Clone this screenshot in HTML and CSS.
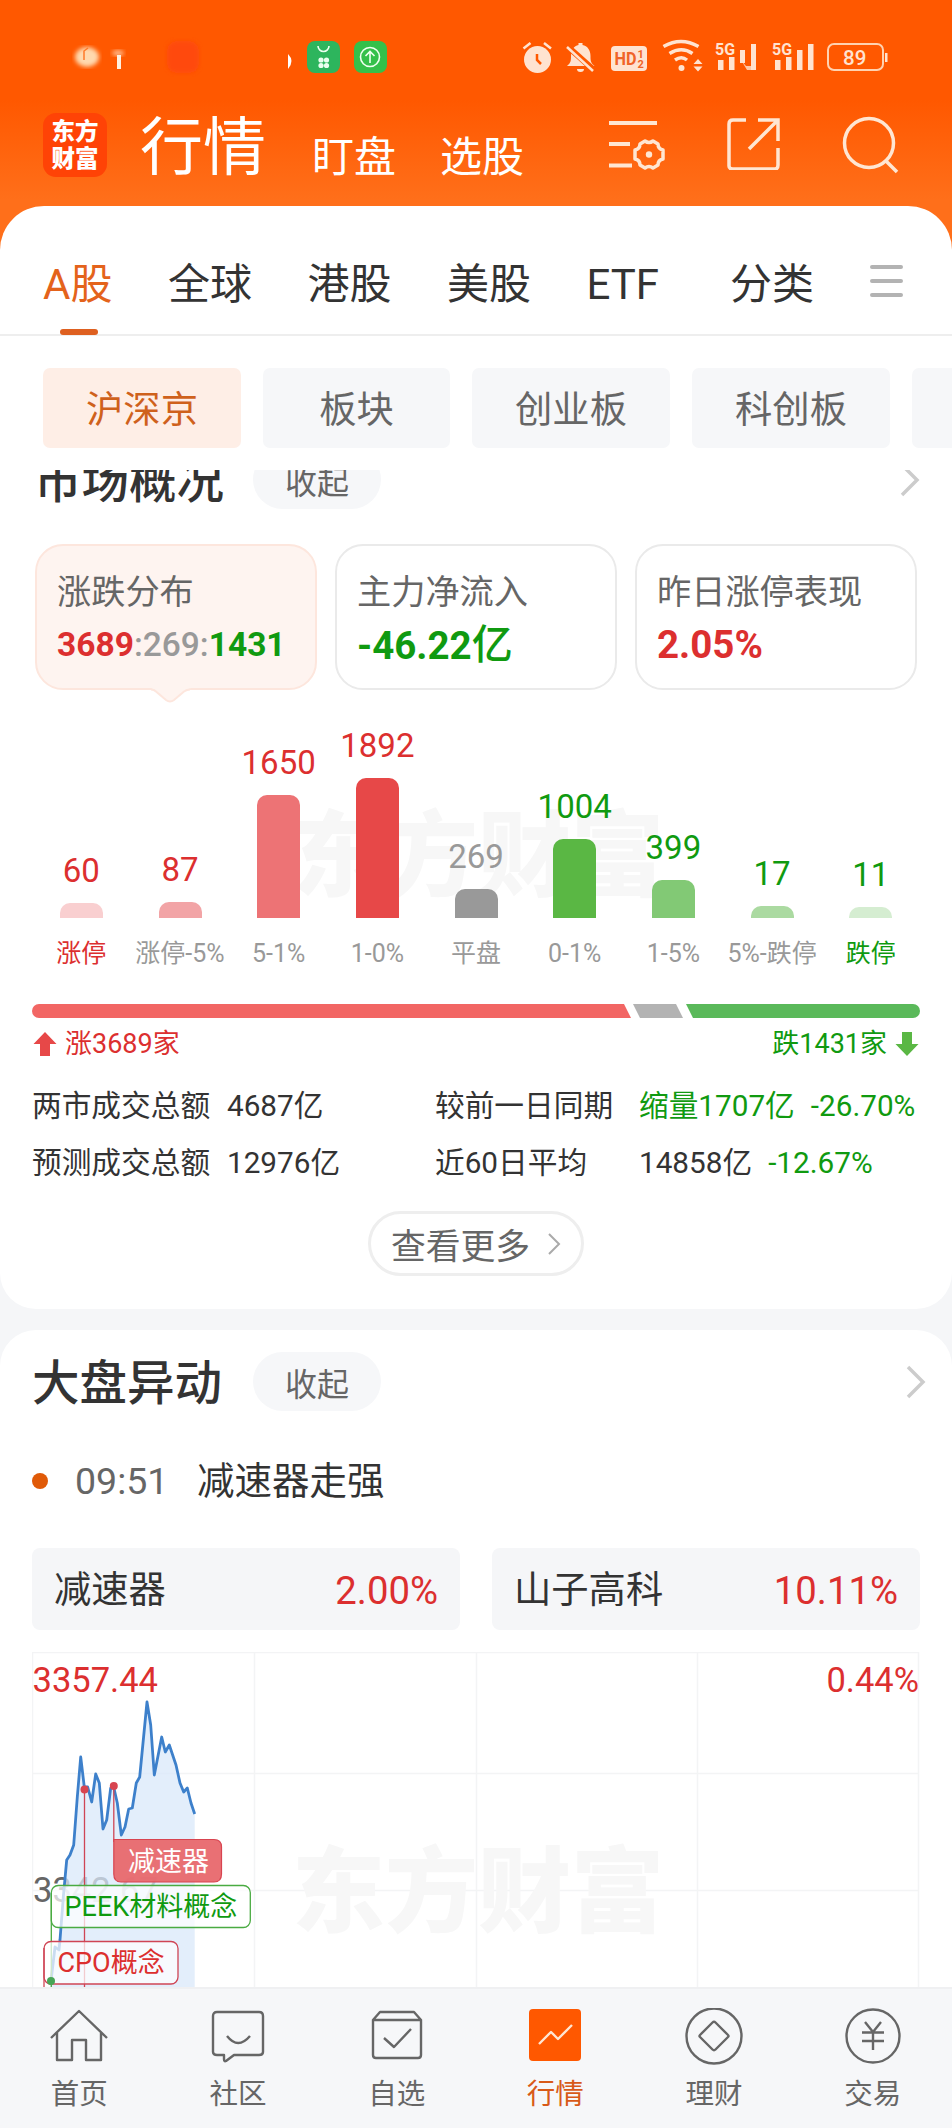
FILE: index.html
```html
<!DOCTYPE html>
<html lang="zh-CN">
<head>
  <meta charset="UTF-8" />
  <meta name="viewport" content="width=device-width, initial-scale=1.0" />
  <title>行情</title>
  <link rel="stylesheet" href="styles.css">
</head>
<body>
  <header class="header">
    <div class="status">
      <svg class="status-left" width="400" height="48" viewBox="0 33 400 48">
        <defs>
          <filter id="soft"><feGaussianBlur stdDeviation="2" /></filter>
        </defs>
        <ellipse cx="87" cy="57" rx="12" ry="10" fill="#ffd9ae" filter="url(#soft)" />
        <path d="M84 60v-9l4-3" stroke="#ff7a2a" stroke-width="1.5" fill="none" />
        <ellipse cx="118" cy="53" rx="6" ry="3" fill="#ffb98a" filter="url(#soft)" />
        <rect x="117" y="55" width="4" height="14" fill="#fff0e0" />
        <rect x="167" y="41" width="32" height="32" rx="9" fill="#ff4a08" filter="url(#soft)" />
        <path d="M288 54q7 7 0 15z" fill="#fff" />
        <rect x="307" y="41" width="33" height="32" rx="8" fill="#2db55d" />
        <path d="M318 46a5.500 5.500 0 0 0 11 0" stroke="#eafff0" stroke-width="1.600" fill="none" />
        <g fill="#eafff0"><circle cx="321" cy="60" r="2.600" /><circle cx="326.500" cy="60" r="2.600" /><circle cx="321" cy="65.500" r="2.600" /><circle cx="326.500" cy="65.500" r="2.600" /></g>
        <rect x="354" y="41" width="33" height="32" rx="8" fill="#34c04a" />
        <g stroke="#f0fff0" stroke-width="1.600" fill="none"><circle cx="370" cy="57" r="9.500" /><path d="M370 63V52M365.500 56l4.500-4.500 4.500 4.500" /></g>
      </svg>
      <svg class="status-right" width="372" height="48" viewBox="520 33 372 48">
        <g fill="#ffe3d0">
          <circle cx="537.500" cy="59.500" r="13.500" />
          <path d="M523.500 48.500l7-5.500M551 48.500l-7-5.500" stroke="#ffe3d0" stroke-width="2.500" />
          <path d="M537 54v6l4 4" stroke="#ff5800" stroke-width="2.500" fill="none" />
          <path d="M567 66c4-3 4-6 4-10 0-6 3-10 7.500-11V43h4v2c5 1 8 5 8 11 0 4 0 7 4 10zM577 69h7a3.500 3 0 0 1-7 0z" />
          <path d="M567 46l28 25" stroke="#ff5800" stroke-width="6" />
          <path d="M567 47l26 24" stroke="#ffe3d0" stroke-width="2.500" />
          <rect x="611" y="46" width="36" height="25" rx="4" />
          <path d="M663.500 46.500q17.500-10 35 0M669.500 53.500q12-7.500 23 0M675 60q6.500-4.500 12 0" stroke="#ffe3d0" stroke-width="3.500" fill="none" />
          <circle cx="681.500" cy="68" r="3" />
          <path d="M693.500 64l4.500-5 4.500 5zM693.500 66.500l4.500 5 4.500-5z" />
          <rect x="718" y="60" width="5.500" height="10" /><rect x="729" y="57" width="5.500" height="13" /><rect x="740" y="50" width="5" height="13" /><rect x="751" y="44" width="5" height="26" />
          <path d="M741 60l5 6 6 0v4h-5z" opacity=".8" />
          <rect x="775" y="60" width="5.500" height="10" /><rect x="786" y="57" width="5.500" height="13" /><rect x="797" y="50" width="5.500" height="20" /><rect x="808" y="44" width="5.500" height="26" />
          <rect x="885" y="53" width="2.500" height="9" />
          <text class="bold" x="715" y="54.500" font-size="17" textLength="20" lengthAdjust="spacingAndGlyphs">5G</text>
          <text class="bold" x="772" y="54.500" font-size="17" textLength="20" lengthAdjust="spacingAndGlyphs">5G</text>
          <text x="843" y="65" font-size="20.500" font-weight="500">89</text>
        </g>
        <rect x="828" y="44" width="55" height="26" rx="6" fill="none" stroke="#ffd2b0" stroke-width="2" />
        <g fill="#f06428">
          <text class="bold" x="614.500" y="65" font-size="18" textLength="22" lengthAdjust="spacingAndGlyphs">HD</text>
          <text class="bold" x="637.500" y="57.500" font-size="11">1</text>
          <text class="bold" x="637.500" y="67.500" font-size="11">2</text>
        </g>
      </svg>
    </div>
    <div class="title-bar">
      <div class="logo"><span>东方</span><span>财富</span></div>
      <h1>行情</h1>
      <span class="sub-title">盯盘</span>
      <span class="sub-title">选股</span>
      <div class="actions">
        <svg width="58" height="56" viewBox="0 0 58 56">
          <g fill="none" stroke="#ffe6d2" stroke-width="4">
            <path d="M1 7h48M1 28h21M1 49.500h23" />
            <path stroke-width="3.500" stroke-linejoin="round" d="M37 25q4 3 8 0l5 3q0 5 5 6v9q-5 1-5 6l-5 3q-4-3-8 0l-5-3q0-5-5-6v-9q5-1 5-6z" />
          </g>
          <circle cx="41" cy="38.500" r="3.200" fill="#ffe6d2" />
        </svg>
        <svg width="54" height="54" viewBox="0 0 54 54">
          <path fill="none" stroke="#ffe6d2" stroke-width="3.500" d="M20 4H7q-4 0-4 4v42q0 3 4 3h42q3 0 3-4V32M32 4h20v21M51 5L23 33" />
        </svg>
        <svg width="58" height="58" viewBox="0 0 58 58">
          <g fill="none" stroke="#ffe6d2" stroke-width="3.500"><circle cx="27" cy="27" r="24.500" /><path d="M43 44l12 12" /></g>
        </svg>
      </div>
    </div>
  </header>

  <main class="panel">
    <nav class="tabs">
      <a class="tab active">A股</a>
      <a class="tab">全球</a>
      <a class="tab">港股</a>
      <a class="tab">美股</a>
      <a class="tab">ETF</a>
      <a class="tab last">分类</a>
      <svg class="menu" width="33" height="34" viewBox="0 0 33 34">
        <path d="M2 3h29M2 17h29M2 31h29" stroke="#b3b3b3" stroke-width="4" stroke-linecap="round" />
      </svg>
    </nav>

    <div class="chips">
      <span class="chip active">沪深京</span>
      <span class="chip narrow">板块</span>
      <span class="chip">创业板</span>
      <span class="chip">科创板</span>
      <span class="chip"></span>
    </div>

    <div class="scroll">
      <section class="overview">
        <div class="section-head">
          <h2>市场概况</h2>
          <button class="pill">收起</button>
          <svg class="arrow" width="20" height="34" viewBox="0 0 20 34"><path d="M2 2l15 15L2 32" fill="none" stroke="#ccc" stroke-width="3.500" /></svg>
        </div>

        <div class="cards">
          <div class="card selected">
            <p class="card-title">涨跌分布</p>
            <p class="ratio"><b class="up">3689</b><span>:269:</span><b class="down">1431</b></p>
            <svg class="pointer" width="40" height="16" viewBox="0 0 40 16"><path d="M0 0l4 2 11 10q4 3 8 0L34 2l6-2z" fill="#fef4f0" /><path d="M0 1.500q3 0 5 2l10 8.500q4 3 8 0l10-8.500q3-2 6-2" fill="none" stroke="#fde6dd" stroke-width="2" /></svg>
          </div>
          <div class="card">
            <p class="card-title">主力净流入</p>
            <p class="value down">-46.22<span class="unit">亿</span></p>
          </div>
          <div class="card">
            <p class="card-title">昨日涨停表现</p>
            <p class="value up">2.05%</p>
          </div>
        </div>

        <div class="bars">
          <div class="watermark">东方财富</div>
          <div class="col up"><em>60</em><i style="height:15px;background:#f9cfd0"></i><small class="on">涨停</small></div>
          <div class="col up"><em>87</em><i style="height:16px;background:#f2a4a6"></i><small>涨停-5%</small></div>
          <div class="col up"><em>1650</em><i style="height:123px;background:#ed7375"></i><small>5-1%</small></div>
          <div class="col up"><em>1892</em><i style="height:140px;background:#e74848"></i><small>1-0%</small></div>
          <div class="col flat"><em>269</em><i style="height:29px;background:#999"></i><small>平盘</small></div>
          <div class="col down"><em>1004</em><i style="height:79px;background:#5ab744"></i><small>0-1%</small></div>
          <div class="col down"><em>399</em><i style="height:38px;background:#82c975"></i><small>1-5%</small></div>
          <div class="col down"><em>17</em><i style="height:12px;background:#abdaa1"></i><small>5%-跌停</small></div>
          <div class="col down"><em>11</em><i style="height:11px;background:#d5edd1"></i><small class="on">跌停</small></div>
        </div>

        <svg class="ratio-bar" width="888" height="14" viewBox="0 0 888 14">
          <path d="M7 0H592l7 14H7A7 7 0 0 1 7 0z" fill="#f26664" />
          <path d="M601 0h43l7 14h-43z" fill="#b3b3b3" />
          <path d="M654 0h227a7 7 0 0 1 0 14H661z" fill="#5ab95a" />
        </svg>
        <div class="totals">
          <svg width="24" height="26" viewBox="0 0 24 26"><path d="M12 1l11.500 12H17v12H7V13H.5z" fill="#e74848" /></svg>
          <span class="up">涨3689家</span>
          <span class="down right">跌1431家</span>
          <svg width="24" height="26" viewBox="0 0 24 26"><path d="M12 25L.5 13H7V1h10v12h6.500z" fill="#5ab744" /></svg>
        </div>

        <div class="stats">
          <span>两市成交总额</span><span>4687亿</span><span>较前一日同期</span><span class="down">缩量1707亿<b>-26.70%</b></span>
          <span>预测成交总额</span><span>12976亿</span><span>近60日平均</span><span>14858亿<b class="down">-12.67%</b></span>
        </div>

        <button class="more">查看更多
          <svg width="14" height="22" viewBox="0 0 14 22"><path d="M2 1l10 10L2 21" fill="none" stroke="#aaa" stroke-width="2" /></svg>
        </button>
      </section>

      <section class="moves">
        <div class="section-head">
          <h2>大盘异动</h2>
          <button class="pill">收起</button>
          <svg class="arrow" width="20" height="34" viewBox="0 0 20 34"><path d="M2 2l15 15L2 32" fill="none" stroke="#ccc" stroke-width="3.500" /></svg>
        </div>
        <div class="event"><i></i><time>09:51</time><span>减速器走强</span></div>
        <div class="stocks">
          <div class="stock"><span>减速器</span><span class="up">2.00%</span></div>
          <div class="stock"><span>山子高科</span><span class="up">10.11%</span></div>
        </div>

        <svg class="chart" width="888" height="336" viewBox="32 1652 888 336">
          <path d="M32 1652.500H919M32 1773.500H919M32 1890.500H919M32.500 1652V1988M254.500 1652V1988M476.500 1652V1988M697.500 1652V1988M918.500 1652V1988" stroke="#f3f4f5" stroke-width="1.500" fill="none" />
          <text class="chart-mark" x="292" y="1925">东方财富</text>
          <text x="32.500" y="1692" font-size="34.500" fill="#dc2f2f">3357.44</text>
          <text x="919" y="1692" font-size="34.500" fill="#dc2f2f" text-anchor="end">0.44%</text>
          <text x="33" y="1902" font-size="34.500" fill="#666">3342.67</text>
          <path d="M32 1988H50V1980L55 1947L60 1940L66.700 1860L73.700 1845L80.700 1757L84 1787L88 1787L91.700 1802L95.700 1774L99 1783L103 1829L106.700 1820L110.700 1788L113.700 1787L117.300 1803L121.300 1835L125 1827L128.700 1809L132.300 1808L136.300 1783L139.700 1777L147 1702L150.700 1725L154.300 1775L161.700 1737L165.300 1752L169.300 1745L176 1765L180 1783L183.700 1792L187.300 1788L191 1803L194.700 1814V1988z" fill="#d9e8fa" fill-opacity=".75" />
          <path d="M51 1981L55 1947L59 1950L60 1940L63.300 1897L66.700 1860L70 1855L73.700 1845L77.300 1797L80.700 1757L84.300 1787L87.700 1787L91.700 1802L95.700 1774L99.300 1783L103 1829L106.700 1820L110.700 1788L113.700 1787L117.300 1803L121.300 1835L125 1827L128.700 1809L132.300 1808L136.300 1783L139.700 1777L147 1702L150.700 1725L154.300 1775L161.700 1737L165.300 1752L169.300 1745L176 1765L180 1783L183.700 1792L187.300 1788L191 1803L194.700 1814" fill="none" stroke="#3d80cb" stroke-width="2.800" stroke-linejoin="round" />
          <path d="M84.500 1790V1988M113.800 1786V1842" stroke="#cf4555" stroke-width="1.300" />
          <circle cx="84.500" cy="1789.500" r="4" fill="#d84450" />
          <circle cx="113.800" cy="1786" r="4" fill="#d84450" />
          <path d="M113.800 1839.500H214q7.500 0 7.500 7.500V1874q0 8-7.500 8H121q-7.200 0-7.200-8z" fill="#e8686d" fill-opacity=".95" stroke="#d84450" stroke-width="1.200" />
          <text x="128" y="1870.500" font-size="27" fill="#fff">减速器</text>
          <rect x="51.300" y="1885.500" width="199" height="42" rx="7" fill="#fff" fill-opacity=".72" stroke="#4aab42" stroke-width="1.300" />
          <path d="M51.300 1893V1988" stroke="#4aab42" stroke-width="1.300" />
          <text x="64.500" y="1916" font-size="27" fill="#109a10">PEEK材料概念</text>
          <rect x="44" y="1941.500" width="134" height="42.500" rx="7" fill="#fff" fill-opacity=".72" stroke="#cf4555" stroke-width="1.300" />
          <path d="M44 1948V1988" stroke="#cf4555" stroke-width="1.300" />
          <circle cx="51" cy="1981" r="4" fill="#46a556" />
          <text x="57.500" y="1972" font-size="27" fill="#dc2f2f">CPO概念</text>
        </svg>
      </section>
    </div>
  </main>

  <footer class="bottom-nav">
    <a class="nav-item">
      <svg width="60" height="60" viewBox="0 0 60 60"><path d="M2 30L30 3l28 27M8 25v27h15V32h14v20h15V25" /></svg>
      <span>首页</span>
    </a>
    <a class="nav-item">
      <svg width="60" height="60" viewBox="0 0 60 60"><path d="M9 4h42q4 0 4 4v36q0 3-4 3H26l-8 6q-2 1-2-2v-4H9q-4 0-4-3V8q0-4 4-4zM19 28q11 14 23 0" /></svg>
      <span>社区</span>
    </a>
    <a class="nav-item">
      <svg width="60" height="60" viewBox="0 0 60 60"><path d="M6 12l7-8h34l7 8v35q0 3-3 3H9q-3 0-3-3zM6 12h48M17 30l10 9 17-18" /></svg>
      <span>自选</span>
    </a>
    <a class="nav-item active">
      <svg width="60" height="60" viewBox="0 0 60 60"><rect x="4" y="1" width="52" height="52" rx="4" /><path d="M14 36l12-12 7 7 14-14" /></svg>
      <span>行情</span>
    </a>
    <a class="nav-item">
      <svg width="60" height="60" viewBox="0 0 60 60"><circle cx="30" cy="28" r="27.500" /><path d="M28.500 14.500q1.500-1.500 3 0L44 27q1 1 0 2L31.500 41.500q-1.500 1.500-3 0L16 29q-1-1 0-2z" /></svg>
      <span>理财</span>
    </a>
    <a class="nav-item">
      <svg width="60" height="60" viewBox="0 0 60 60"><circle cx="30" cy="28" r="26.500" /><path d="M22 14l8 10 8-10M30 24v18M19 24.500h22M19 33h22" /></svg>
      <span>交易</span>
    </a>
  </footer>
</body>
</html>
```

FILE: styles.css
```css
* {
  box-sizing: border-box;
  margin: 0;
  padding: 0;
}

body {
  width: 952px;
  height: 2128px;
  overflow: hidden;
  display: flex;
  flex-direction: column;
  font-family: Roboto, "Noto Sans CJK SC", sans-serif;
  line-height: 1.2;
  color: #333;
  background: #f5f6f8;
}

svg {
  display: block;
  flex: none;
}

svg .bold {
  font-weight: bold;
}

button {
  border: none;
  font-family: inherit;
}

.up {
  color: #dc2f2f;
}

.down {
  color: #109a10;
}

/* Header */
.header {
  height: 260px;
  flex: none;
  padding-top: 33px;
  background: linear-gradient(#ff5800 0, #ff5800 100px, #ff6f1a 200px, #ff6f1a);
}

.status {
  display: flex;
  justify-content: space-between;
  padding-right: 60px;
}

.title-bar {
  display: flex;
  height: 64px;
  margin-top: 32px;
  padding-left: 43px;
}

.logo {
  width: 64px;
  height: 64px;
  padding-top: 6px;
  border-radius: 13px;
  background: #ff4306;
  color: #fff;
  font-size: 23.5px;
  font-weight: 900;
  line-height: 27px;
  text-align: center;
}

.logo span {
  display: block;
}

h1 {
  margin-left: 33px;
  font-size: 63px;
  font-weight: 400;
  line-height: 69px;
  color: #fff;
}

.sub-title {
  margin-left: 46px;
  font-size: 42px;
  line-height: 89px;
  color: #fff;
}

.sub-title + .sub-title {
  margin-left: 44px;
}

.actions {
  display: flex;
  align-items: flex-start;
  margin-left: 84px;
  padding-top: 3px;
}

.actions svg + svg {
  margin-left: 60px;
}

.actions svg:last-child {
  margin-left: 62px;
}

/* Main panel */
.panel {
  flex: 1;
  min-height: 0;
  display: flex;
  flex-direction: column;
  margin-top: -54px;
  border-radius: 44px 44px 0 0;
  background: #fff;
}

.tabs {
  display: flex;
  height: 130px;
  flex: none;
  padding-left: 43px;
  border-bottom: 2px solid #eee;
}

.tab {
  position: relative;
  margin-right: 55.5px;
  font-size: 42px;
  line-height: 157px;
}

.tab:nth-child(5) {
  margin-right: 71px;
}

.tab.last {
  margin-right: 56px;
}

.tab.active {
  color: #e4631b;
}

.tab.active::after {
  content: "";
  position: absolute;
  left: 17px;
  top: 123px;
  width: 38px;
  height: 6px;
  border-radius: 3px;
  background: #de6020;
}

.menu {
  margin-top: 58px;
}

.chips {
  display: flex;
  gap: 22px;
  flex: none;
  height: 134px;
  padding: 32px 0 22px 43px;
  overflow: hidden;
}

.chip {
  width: 198px;
  flex: none;
  border-radius: 7px;
  background: #f6f7f9;
  color: #666;
  font-size: 37.3px;
  line-height: 85px;
  text-align: center;
}

.chip.narrow {
  width: 187px;
}

.chip.active {
  background: #feeee6;
  color: #cf611c;
}

.scroll {
  flex: 1;
  min-height: 0;
  overflow: hidden;
  background: #f5f6f8;
}

.overview {
  display: flow-root;
  height: 839px;
  padding: 0 32px;
  border-radius: 0 0 36px 36px;
  background: #fff;
}

.section-head {
  display: flex;
  align-items: center;
  height: 59px;
}

.overview .section-head {
  margin-top: -20px;
}

h2 {
  font-size: 47.5px;
  font-weight: 500;
  line-height: 59px;
  padding-top: 5px;
}

.pill {
  width: 128px;
  height: 59px;
  margin-left: 31px;
  border-radius: 30px;
  background: #f6f7f9;
  color: #666;
  font-size: 32px;
}

.overview h2 {
  padding-left: 2px;
}

.overview .pill {
  margin-left: 29px;
}

.arrow {
  margin-left: auto;
}

.cards {
  display: flex;
  gap: 18px;
  width: 882px;
  margin: 35px 3px 0;
}

.card {
  position: relative;
  flex: 1;
  height: 146px;
  padding: 22px 0 0 20px;
  border: 2px solid #eaeaea;
  border-radius: 28px;
}

.card.selected {
  background: #fef4f0;
  border-color: #fde6dd;
}

.card-title {
  font-size: 34.2px;
  line-height: 48px;
  color: #666;
}

.ratio {
  font-size: 33.5px;
  line-height: 58px;
  color: #999;
}

.ratio span {
  font-weight: 500;
}

.value {
  font-size: 38.5px;
  font-weight: bold;
  line-height: 58px;
}

.unit {
  font-size: 41px;
  font-weight: 500;
}

.pointer {
  position: absolute;
  left: 114px;
  top: 142px;
}

.bars {
  position: relative;
  display: flex;
  height: 285px;
  margin: 0 0 29px;
}

.col {
  position: relative;
  flex: 1;
  display: flex;
  flex-direction: column;
  align-items: center;
  justify-content: flex-end;
}

.col em {
  font-size: 33px;
  font-style: normal;
  line-height: 40px;
  margin-bottom: 12px;
}

.col i {
  width: 43px;
  border-radius: 10px 10px 0 0;
}

.flat {
  color: #999;
}

.col small {
  margin-top: 17px;
  height: 40px;
  font-size: 25px;
  line-height: 38px;
  white-space: nowrap;
  color: #999;
}

.col.up small.on {
  color: #dc2f2f;
}

.col.down small.on {
  color: #109a10;
}

.watermark {
  position: absolute;
  left: 260px;
  top: 108px;
  font-size: 93px;
  font-weight: 900;
  line-height: 120px;
  color: #f7f7f7;
}

.totals {
  display: flex;
  align-items: center;
  gap: 8px;
  margin-top: 8px;
  padding: 0 1px;
  font-size: 27px;
  line-height: 36px;
}

.totals .right {
  margin-left: auto;
}

.stats {
  display: grid;
  grid-template-columns: 195px 208px 204px 1fr;
  margin-top: 15px;
  font-size: 29.7px;
  line-height: 57px;
  white-space: nowrap;
}

.stats b {
  margin-left: 16px;
  font-weight: 400;
}

.more {
  display: flex;
  align-items: center;
  justify-content: center;
  gap: 17px;
  width: 216px;
  height: 65px;
  margin: 20px auto 0;
  border: 3px solid #eee;
  border-radius: 33px;
  background: #fff;
  color: #666;
  font-size: 34.8px;
}

/* Market moves */
.moves {
  margin-top: 21px;
  padding: 22px 32px 0;
  border-radius: 36px 36px 0 0;
  background: #fff;
}

.moves .section-head {
  margin-right: -6px;
}

.event {
  display: flex;
  align-items: center;
  margin-top: 45px;
  height: 50px;
  font-size: 37.5px;
}

.event i {
  width: 16px;
  height: 16px;
  border-radius: 50%;
  background: #e05a08;
}

.event time {
  width: 122px;
  margin-left: 27px;
  color: #666;
}

.stocks {
  display: flex;
  gap: 32px;
  margin: 42px 0 22px;
}

.stock {
  flex: 1;
  display: flex;
  justify-content: space-between;
  padding: 0 22px;
  border-radius: 8px;
  background: #f5f6f8;
  font-size: 37.3px;
  line-height: 85px;
  height: 82px;
}

.stock .up {
  font-size: 38.3px;
}

.chart-mark {
  font-size: 93px;
  font-weight: 900;
  fill: #f7f7f7;
}

/* Bottom navigation */
.bottom-nav {
  display: flex;
  height: 141px;
  flex: none;
  padding-top: 19px;
  border-top: 2px solid #eff0f2;
  background: #f6f7f9;
}

.nav-item {
  flex: 1;
  display: flex;
  flex-direction: column;
  align-items: center;
  font-size: 28.5px;
  line-height: 54px;
  color: #666;
}

.nav-item svg {
  fill: none;
  stroke: #666;
  stroke-width: 2.4px;
  stroke-linejoin: round;
}

.nav-item.active {
  color: #d85a18;
}

.nav-item.active rect {
  fill: #ff5800;
  stroke: none;
}

.nav-item.active path {
  stroke: #ffe6d2;
}
```
